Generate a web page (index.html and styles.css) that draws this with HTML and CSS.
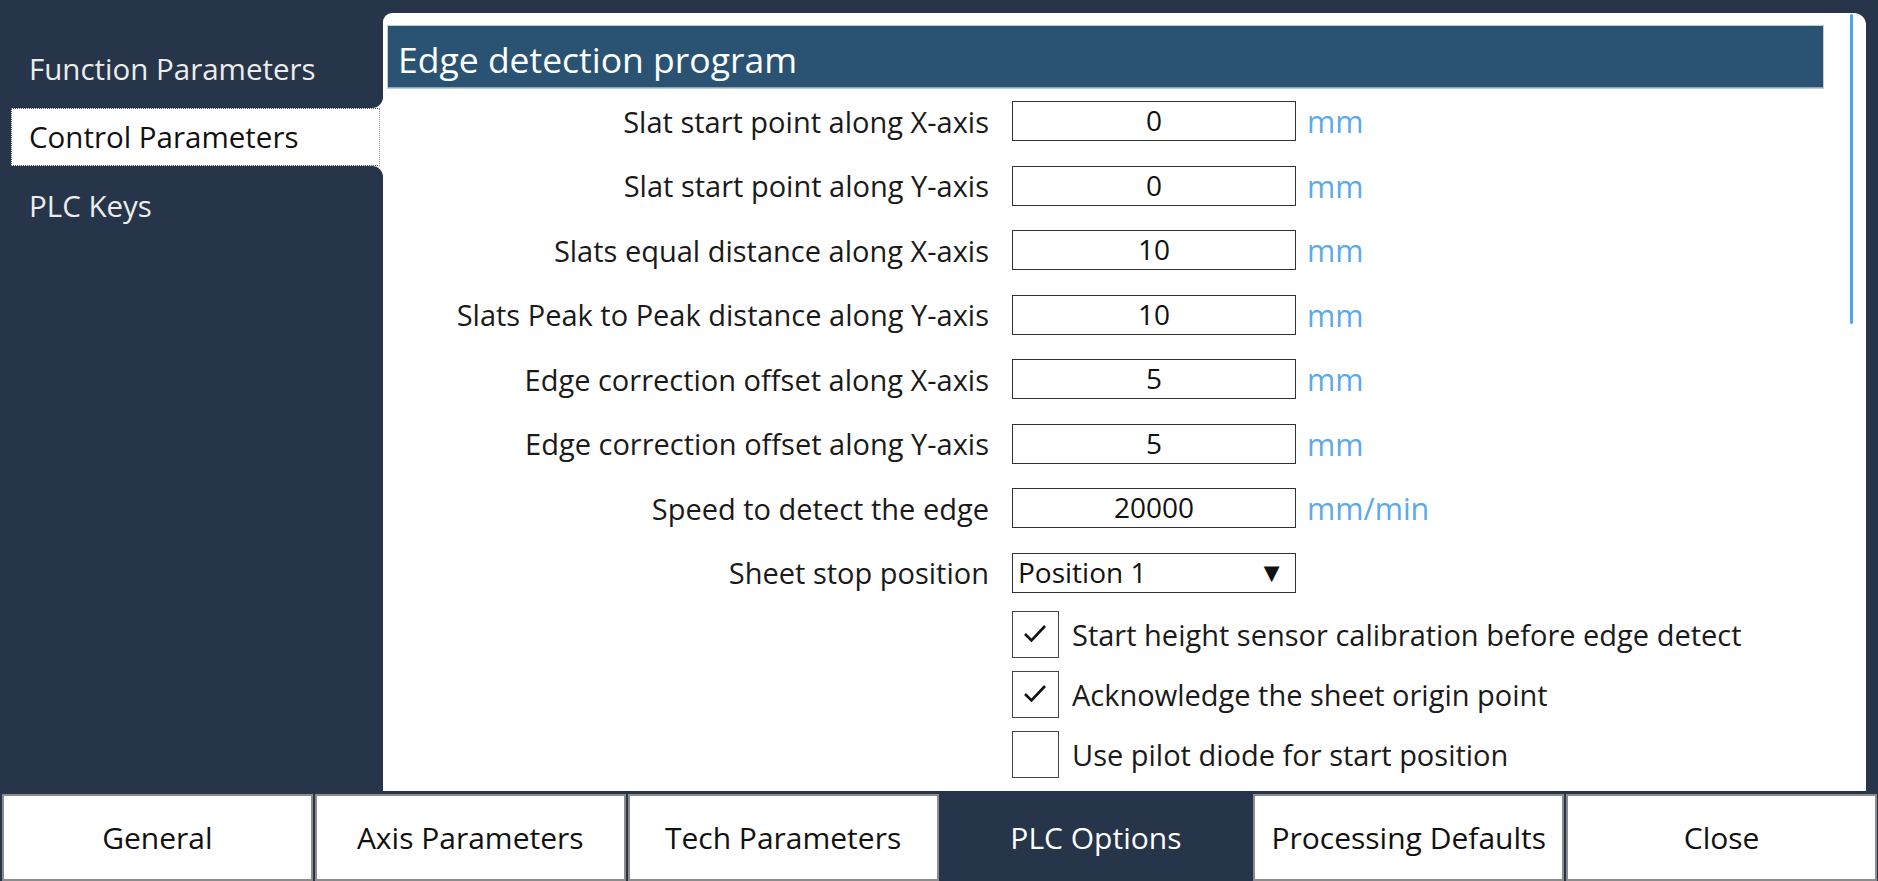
FILE: index.html
```html
<!DOCTYPE html>
<html>
<head>
<meta charset="utf-8">
<link rel="stylesheet" href="styles.css">
</head>
<body>
<div class="app">
  <div class="top">
    <nav class="sidebar">
      <div class="tab tab-first">Function Parameters</div>
      <div class="tab tab-active">Control Parameters</div>
      <div class="tab tab-last">PLC Keys</div>
    </nav>
    <main class="panel">
      <div class="scrollbar"></div>
      <h1 class="header">Edge detection program</h1>
      <div class="form">
        <label class="lbl">Slat start point along X-axis</label><div class="field">0</div><span class="unit">mm</span>
        <label class="lbl">Slat start point along Y-axis</label><div class="field">0</div><span class="unit">mm</span>
        <label class="lbl">Slats equal distance along X-axis</label><div class="field">10</div><span class="unit">mm</span>
        <label class="lbl">Slats Peak to Peak distance along Y-axis</label><div class="field">10</div><span class="unit">mm</span>
        <label class="lbl">Edge correction offset along X-axis</label><div class="field">5</div><span class="unit">mm</span>
        <label class="lbl">Edge correction offset along Y-axis</label><div class="field">5</div><span class="unit">mm</span>
        <label class="lbl">Speed to detect the edge</label><div class="field">20000</div><span class="unit">mm/min</span>
        <label class="lbl">Sheet stop position</label><div class="field select"><span>Position 1</span><span class="arrow">▼</span></div><span class="unit"></span>
      </div>
      <div class="checks">
        <div class="check-row"><span class="box"><svg viewBox="0 0 47 47" width="47" height="47"><polyline points="13,24 19.5,30.5 33,16" fill="none" stroke="#111" stroke-width="2.6"/></svg></span><span class="check-label">Start height sensor calibration before edge detect</span></div>
        <div class="check-row"><span class="box"><svg viewBox="0 0 47 47" width="47" height="47"><polyline points="13,24 19.5,30.5 33,16" fill="none" stroke="#111" stroke-width="2.6"/></svg></span><span class="check-label">Acknowledge the sheet origin point</span></div>
        <div class="check-row"><span class="box"></span><span class="check-label">Use pilot diode for start position</span></div>
      </div>
    </main>
  </div>
  <footer class="bottom">
    <button class="btn">General</button>
    <button class="btn">Axis Parameters</button>
    <button class="btn">Tech Parameters</button>
    <button class="btn btn-active">PLC Options</button>
    <button class="btn">Processing Defaults</button>
    <button class="btn">Close</button>
  </footer>
</div>
</body>
</html>
```

FILE: styles.css
```css
* { box-sizing: border-box; }
html, body {
  margin: 0;
  padding: 0;
  width: 1878px;
  height: 881px;
  overflow: hidden;
  background: #263549;
  font-family: "Open Sans", "Noto Sans", sans-serif;
}
.app {
  display: grid;
  grid-template-rows: 794px 87px;
  height: 881px;
}
.top {
  display: flex;
  align-items: stretch;
}
.sidebar {
  width: 383px;
  flex: none;
  display: flex;
  flex-direction: column;
  background: linear-gradient(to right, #263549 12px, #ffffff 12px);
  height: 791px;
}
.tab {
  font-size: 29.5px;
  line-height: 36px;
  padding-left: 29px;
  color: #ececec;
  background: #263549;
  white-space: nowrap;
}
.tab-first {
  height: 108px;
  padding-top: 51px;
  border-bottom-right-radius: 11px;
}
.tab-active {
  height: 58px;
  margin-left: 11px;
  width: 369px;
  padding-left: 17px;
  padding-top: 10px;
  background: #ffffff;
  color: #111;
  border: 1px dotted #555;
  border-right-color: #999;
}
.tab-last {
  flex: 1;
  padding-top: 22px;
  border-top-right-radius: 11px;
}
.panel {
  position: relative;
  flex: 1;
  margin-top: 13px;
  margin-right: 12px;
  height: 778px;
  background: #ffffff;
  border-radius: 9px 12px 0 0;
  padding: 13px 0 0 5px;
}
.scrollbar {
  position: absolute;
  right: 13px;
  top: 1px;
  width: 3px;
  height: 310px;
  border-radius: 2px;
  background: #4fa6ee;
}
.header {
  margin: 0;
  width: 1435px;
  height: 62px;
  background: #2a5373;
  border-bottom: 1px solid #8fa5b8;
  box-shadow: 0 0 0 1px rgba(150, 170, 190, 0.6);
  color: #ffffff;
  font-weight: normal;
  font-size: 35.5px;
  line-height: 67px;
  padding-left: 10px;
  white-space: nowrap;
}
.form {
  display: grid;
  grid-template-columns: 624px 284px auto;
  grid-auto-rows: 40px;
  row-gap: 24.5px;
  column-gap: 0;
  margin-top: 13px;
  align-items: center;
}
.lbl {
  text-align: right;
  padding-right: 23px;
  font-size: 29px;
  color: #1a1a1a;
  white-space: nowrap;
}
.field {
  height: 40px;
  border: 1.5px solid #333;
  font-size: 28px;
  line-height: 36px;
  text-align: center;
  color: #111;
}
.select {
  display: flex;
  justify-content: space-between;
  text-align: left;
  padding: 0 10px 0 5px;
}
.arrow {
  font-size: 27px;
  line-height: 36px;
}
.unit {
  padding-left: 11px;
  font-size: 30.5px;
  color: #5aaaeb;
  white-space: nowrap;
}
.checks {
  display: flex;
  flex-direction: column;
  gap: 13px;
  margin-top: 18px;
  padding-left: 624px;
}
.check-row {
  display: flex;
  align-items: center;
  gap: 13px;
  height: 47px;
}
.box {
  width: 47px;
  height: 47px;
  border: 1.5px solid #444;
  display: block;
  flex: none;
}
.box svg { display: block; margin: -1.5px; }
.check-label {
  font-size: 29px;
  color: #1a1a1a;
  white-space: nowrap;
}
.bottom {
  display: grid;
  grid-template-columns: repeat(6, 1fr);
  padding: 0 1px 0 2px;
  gap: 2px;
}
.btn {
  font-family: "Open Sans", "Noto Sans", sans-serif;
  font-size: 30px;
  color: #111;
  background: #ffffff;
  border: 2px solid #8c8c8c;
  margin: 0;
  padding: 0;
}
.btn-active {
  background: #263549;
  color: #ffffff;
  border-color: #263549;
}
```
